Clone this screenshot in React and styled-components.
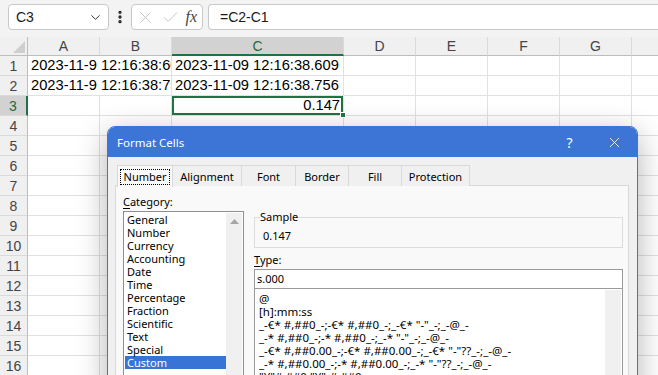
import React from "react";
import styled, { createGlobalStyle } from "styled-components";
import { ChevronDown, EllipsisVertical, X, Check } from "lucide-react";

const GlobalStyle = createGlobalStyle`
  html, body {
    margin: 0;
    padding: 0;
  }
  body {
    font-family: "Liberation Sans", Arial, sans-serif;
    background: #fff;
  }
  * {
    box-sizing: border-box;
  }
`;

const Screen = styled.div`
  position: relative;
  width: 658px;
  height: 375px;
  overflow: hidden;
  background: #fff;
`;

/* ---------- formula bar ---------- */

const FormulaBar = styled.div`
  display: flex;
  align-items: center;
  height: 37px;
  padding: 0 0 3px 8px;
  background: #f3f3f3;
`;

const Box = styled.div`
  display: flex;
  align-items: center;
  height: 26px;
  background: #fff;
  border: 1px solid #c9c9c9;
  border-radius: 4px;
  font-size: 14px;
  color: #1a1a1a;
`;

const NameBox = styled(Box)`
  width: 101px;
  justify-content: space-between;
  padding: 0 5px 0 7px;
`;

const Dots = styled.div`
  width: 22px;
  display: flex;
  justify-content: center;
  color: #222;
`;

const FxBox = styled(Box)`
  width: 72px;
  justify-content: space-between;
  padding: 0 5px 0 4px;
  color: #bdbdbd;
`;

const Fx = styled.span`
  font-family: "Liberation Serif", "Times New Roman", serif;
  font-style: italic;
  font-size: 16px;
  color: #444;
`;

const FormulaInput = styled(Box)`
  flex: 1;
  margin-left: 5px;
  padding-left: 11px;
  border-right: none;
  border-radius: 4px 0 0 4px;
`;

/* ---------- sheet ---------- */

const Sheet = styled.div`
  display: grid;
  grid-template-columns: 28px 72px 72px 172px 72px 72px 72px 72px 72px;
  grid-template-rows: 19px;
  grid-auto-rows: 20px;
`;

const Corner = styled.div`
  background: #f0f0f0;
  border-right: 1px solid #bdbdbd;
  border-bottom: 1px solid #bdbdbd;
  display: flex;
  align-items: flex-end;
  justify-content: flex-end;
  padding: 0 2px 2px 0;
`;

const ColHeader = styled.div`
  background: ${(p) => (p.$active ? "#d2d2d2" : "#f0f0f0")};
  color: ${(p) => (p.$active ? "#1f6b3e" : "#444")};
  border-right: 1px solid #dadada;
  border-bottom: ${(p) => (p.$active ? "2px solid #1f7244" : "1px solid #bdbdbd")};
  font-size: 14px;
  text-align: center;
  line-height: 18px;
`;

const RowHeader = styled.div`
  background: ${(p) => (p.$active ? "#d2d2d2" : "#f0f0f0")};
  color: ${(p) => (p.$active ? "#1f6b3e" : "#444")};
  border-right: ${(p) => (p.$active ? "2px solid #1f7244" : "1px solid #bdbdbd")};
  border-bottom: 1px solid #dadada;
  font-size: 14px;
  text-align: center;
  line-height: 20px;
`;

const Cell = styled.div`
  position: relative;
  grid-column: span ${(p) => p.$span || 1};
  border-right: 1px solid #e1e1e1;
  border-bottom: 1px solid #e1e1e1;
  padding: 0 3px;
  font-size: 14.7px;
  line-height: 19px;
  color: #000;
  white-space: nowrap;
  overflow: ${(p) => (p.$selected ? "visible" : "hidden")};
  text-align: ${(p) => p.$align || "left"};
  box-shadow: ${(p) => (p.$selected ? "inset 0 0 0 2px #1f7244" : "none")};
`;

const FillHandle = styled.span`
  position: absolute;
  right: -3px;
  bottom: -3px;
  width: 6px;
  height: 6px;
  background: #1f7244;
  border: 1px solid #fff;
  z-index: 2;
`;

/* ---------- dialog ---------- */

const Dialog = styled.div`
  position: absolute;
  left: 107px;
  top: 126px;
  width: 531px;
  height: 270px;
  display: flex;
  flex-direction: column;
  background: #f0f0f0;
  border: 1px solid #3c75d6;
  border-radius: 8px 8px 0 0;
  box-shadow: 0 8px 30px rgba(0, 0, 0, 0.3);
  font-family: "Noto Sans", "Segoe UI", sans-serif;
  font-size: 11px;
  color: #000;
`;

const TitleBar = styled.div`
  display: flex;
  align-items: center;
  height: 30px;
  padding-left: 9px;
  background: #3c75d6;
  color: #fff;
  font-size: 11.5px;
  border-radius: 7px 7px 0 0;
`;

const Title = styled.span`
  flex: 1;
`;

const TitleButton = styled.div`
  width: 45px;
  display: flex;
  justify-content: center;
  font-size: 14px;
`;

const DialogBody = styled.div`
  flex: 1;
  display: flex;
  flex-direction: column;
  padding: 8px 8px 0 7px;
`;

const Tabs = styled.div`
  display: flex;
  height: 21px;
  margin-left: 2px;
`;

const Tab = styled.div`
  width: ${(p) => p.$w}px;
  display: flex;
  align-items: center;
  justify-content: center;
  margin-right: -1px;
  border: 1px solid #d9d9d9;
  border-bottom: none;
  background: ${(p) => (p.$active ? "#f9f9f9" : "#f0f0f0")};
  position: relative;
  z-index: ${(p) => (p.$active ? 1 : 0)};
  height: ${(p) => (p.$active ? "22px" : "21px")};
`;

const Focus = styled.span`
  border: 1px dotted #000;
  padding: 0 3px;
  line-height: 14px;
`;

const Panel = styled.div`
  flex: 1;
  display: flex;
  gap: 10px;
  margin-top: -1px;
  padding: 9px 0 0 7px;
  background: #f9f9f9;
  border: 1px solid #d9d9d9;
`;

const Column = styled.div`
  width: ${(p) => p.$w}px;
  display: flex;
  flex-direction: column;
`;

const Label = styled.div`
  line-height: 14px;
  margin-top: ${(p) => p.$mt || 0}px;
  u {
    text-decoration: underline;
    text-underline-offset: 2px;
  }
`;

const ListBox = styled.div`
  flex: 1;
  display: flex;
  margin-top: ${(p) => p.$mt || 0}px;
  background: #fff;
  border: 1px solid ${(p) => p.$edge || "#8f8f8f"};
  ${(p) => p.$flat && "border-top: none;"}
`;

const Items = styled.div`
  flex: 1;
  padding: ${(p) => p.$pad};
  font-size: ${(p) => p.$size || 11}px;
  white-space: nowrap;
  overflow: hidden;
`;

const Item = styled.div`
  line-height: 13px;
  margin-left: ${(p) => (p.$boxed ? "1px" : "0")};
  padding-left: ${(p) => (p.$boxed ? "2px" : "0")};
  background: ${(p) => (p.$selected ? "#3874d6" : "transparent")};
  color: ${(p) => (p.$selected ? "#fff" : "#000")};
`;

const ScrollTrack = styled.div`
  width: 16px;
  margin: 1px 1px 0 0;
  background: #f0f0f0;
  display: flex;
  justify-content: center;
  padding-top: 6px;
`;

const Sample = styled.fieldset`
  margin: 15px 0 0;
  padding: 0 8px 4px 5px;
  border: 1px solid #dcdcdc;
  legend {
    padding: 0;
    line-height: 14px;
  }
`;

const SampleValue = styled.div`
  line-height: 14px;
  padding: 5px 0 0 3px;
`;

const TypeInput = styled.div`
  height: 20px;
  margin-top: 2px;
  padding-left: 2px;
  line-height: 18px;
  background: #fff;
  border: 1px solid #9a9a9a;
`;

const categories = [
  "General",
  "Number",
  "Currency",
  "Accounting",
  "Date",
  "Time",
  "Percentage",
  "Fraction",
  "Scientific",
  "Text",
  "Special",
  "Custom",
];

const formats = [
  "@",
  "[h]:mm:ss",
  '_-€* #,##0_-;-€* #,##0_-;_-€* "-"_-;_-@_-',
  '_-* #,##0_-;-* #,##0_-;_-* "-"_-;_-@_-',
  '_-€* #,##0.00_-;-€* #,##0.00_-;_-€* "-"??_-;_-@_-',
  '_-* #,##0.00_-;-* #,##0.00_-;_-* "-"??_-;_-@_-',
  '"¥"#,##0;"¥"-#,##0',
];

const tabs = [
  ["Number", 56],
  ["Alignment", 70],
  ["Font", 55],
  ["Border", 54],
  ["Fill", 54],
  ["Protection", 69],
];

const columns = ["A", "B", "C", "D", "E", "F", "G", "H"];

function SheetRow({ n }) {
  const blanks = (count) =>
    Array.from({ length: count }, (_, i) => <Cell key={`b${i}`} />);

  if (n === 1 || n === 2) {
    const a = n === 1 ? "2023-11-9 12:16:38:609" : "2023-11-9 12:16:38:756";
    const c = n === 1 ? "2023-11-09 12:16:38.609" : "2023-11-09 12:16:38.756";
    return (
      <>
        <RowHeader>{n}</RowHeader>
        <Cell $span={2}>{a}</Cell>
        <Cell>{c}</Cell>
        {blanks(5)}
      </>
    );
  }
  if (n === 3) {
    return (
      <>
        <RowHeader $active>{n}</RowHeader>
        <Cell />
        <Cell />
        <Cell $selected $align="right">
          0.147
          <FillHandle />
        </Cell>
        {blanks(5)}
      </>
    );
  }
  return (
    <>
      <RowHeader>{n}</RowHeader>
      {blanks(8)}
    </>
  );
}

export default function App() {
  return (
    <Screen>
      <GlobalStyle />
      <FormulaBar>
        <NameBox>
          C3
          <ChevronDown size={15} strokeWidth={1.6} color="#333" />
        </NameBox>
        <Dots>
          <EllipsisVertical size={16} strokeWidth={3} />
        </Dots>
        <FxBox>
          <X size={19} strokeWidth={1.1} />
          <Check size={19} strokeWidth={1.1} />
          <Fx>fx</Fx>
        </FxBox>
        <FormulaInput>=C2-C1</FormulaInput>
      </FormulaBar>

      <Sheet>
        <Corner>
          <svg width="12" height="12" viewBox="0 0 12 12">
            <polygon points="12,0 12,12 0,12" fill="#cfcfcf" />
          </svg>
        </Corner>
        {columns.map((c) => (
          <ColHeader key={c} $active={c === "C"}>
            {c}
          </ColHeader>
        ))}
        {Array.from({ length: 16 }, (_, i) => (
          <SheetRow key={i} n={i + 1} />
        ))}
      </Sheet>

      <Dialog>
        <TitleBar>
          <Title>Format Cells</Title>
          <TitleButton>?</TitleButton>
          <TitleButton>
            <X size={17} strokeWidth={1.2} />
          </TitleButton>
        </TitleBar>
        <DialogBody>
          <Tabs>
            {tabs.map(([name, w], i) => (
              <Tab key={name} $w={w} $active={i === 0}>
                {i === 0 ? <Focus>{name}</Focus> : name}
              </Tab>
            ))}
          </Tabs>
          <Panel>
            <Column $w={121}>
              <Label>
                <u>C</u>ategory:
              </Label>
              <ListBox $mt={2}>
                <Items $pad="1px 0 0 0">
                  {categories.map((c) => (
                    <Item key={c} $boxed $selected={c === "Custom"}>
                      {c}
                    </Item>
                  ))}
                </Items>
                <ScrollTrack>
                  <svg width="9" height="5" viewBox="0 0 9 5">
                    <polygon points="4.5,0 9,5 0,5" fill="#a6a6a6" />
                  </svg>
                </ScrollTrack>
              </ListBox>
            </Column>
            <Column $w={369}>
              <Sample>
                <legend>Sample</legend>
                <SampleValue>0.147</SampleValue>
              </Sample>
              <Label $mt={5}>
                <u>T</u>ype:
              </Label>
              <TypeInput>s.000</TypeInput>
              <ListBox $edge="#9a9a9a" $flat>
                <Items $pad="3px 0 0 4px" $size={11.5}>
                  {formats.map((f) => (
                    <Item key={f}>{f}</Item>
                  ))}
                </Items>
                <ScrollTrack />
              </ListBox>
            </Column>
          </Panel>
        </DialogBody>
      </Dialog>
    </Screen>
  );
}
